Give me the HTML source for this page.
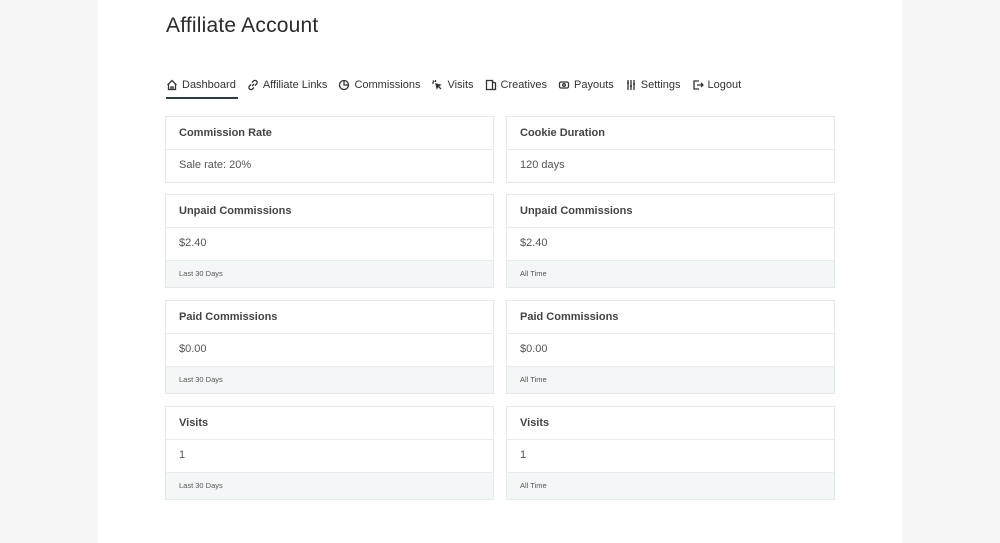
<!DOCTYPE html>
<html><head><meta charset="utf-8"><style>
*{box-sizing:border-box;margin:0;padding:0}
body{width:1000px;height:543px;background:#f7f7f7;font-family:"Liberation Sans",sans-serif;color:#3c3c3c;position:relative;overflow:hidden}
.panel{position:absolute;left:98px;top:0;width:804px;height:543px;background:#fff}
h1{position:absolute;left:166px;top:14px;font-size:21px;font-weight:400;color:#2b2b2b;letter-spacing:0.2px}
.nav{position:absolute;left:166px;top:79px;font-size:11px;color:#333;display:flex;gap:11px;white-space:nowrap}
.nav span{display:flex;align-items:center;gap:4px}
.nav svg{width:12px;height:12px;fill:none;stroke:#333;stroke-width:1.3}
.ul{position:absolute;left:166px;top:97px;width:72px;height:2px;background:#2d3b45}
.card{position:absolute;width:329px;border:1px solid #e6e9ea;background:#fff}
.h{height:33px;line-height:32px;padding-left:13px;font-size:11px;font-weight:bold;color:#444;border-bottom:1px solid #e9ecec}
.b{height:32px;line-height:31px;padding-left:13px;font-size:11px;color:#555}
.f{height:27px;line-height:26px;padding-left:13px;font-size:7.5px;color:#555;background:#f4f7f7;border-top:1px solid #e9ecec}
</style></head><body>
<div class="panel"></div>
<h1>Affiliate Account</h1>
<div class="nav">
<span><svg viewBox="0 0 12 12"><path d="M1.5 6L6 1.5 10.5 6M2.5 5v5.5h7V5M5 10.5V8h2v2.5"/></svg>Dashboard</span>
<span><svg viewBox="0 0 12 12"><path d="M5 7l2-2M4 5.5L2.5 7a2 2 0 003 3L7 8.5M8 6.5L9.5 5a2 2 0 00-3-3L5 3.5"/></svg>Affiliate Links</span>
<span><svg viewBox="0 0 12 12"><circle cx="6" cy="6" r="4.5"/><path d="M6 1.5V6h4.5"/></svg>Commissions</span>
<span><svg viewBox="0 0 12 12"><path d="M5 5l5 5M5 5l1 4 1-2 2-1zM2 1.5l1 1.5M1 4h2M4.5 1v2"/></svg>Visits</span>
<span><svg viewBox="0 0 12 12"><rect x="1.5" y="1.5" width="6" height="9"/><path d="M7.5 3l3 1v6.5h-3"/></svg>Creatives</span>
<span><svg viewBox="0 0 12 12"><rect x="1.5" y="3" width="9" height="6" rx="1.5"/><circle cx="6" cy="6" r="1.3"/></svg>Payouts</span>
<span><svg viewBox="0 0 12 12"><path d="M3 1v10M6 1v10M9 1v10M2 4h2M5 7h2M8 5h2"/></svg>Settings</span>
<span><svg viewBox="0 0 12 12"><path d="M7 2H2v8h5M5 6h6M9 4l2 2-2 2"/></svg>Logout</span>
</div>
<div class="ul"></div>

<div class="card" style="left:165px;top:116px"><div class="h">Commission Rate</div><div class="b">Sale rate: 20%</div></div>
<div class="card" style="left:506px;top:116px"><div class="h">Cookie Duration</div><div class="b">120 days</div></div>

<div class="card" style="left:165px;top:194px"><div class="h">Unpaid Commissions</div><div class="b">$2.40</div><div class="f">Last 30 Days</div></div>
<div class="card" style="left:506px;top:194px"><div class="h">Unpaid Commissions</div><div class="b">$2.40</div><div class="f">All Time</div></div>

<div class="card" style="left:165px;top:300px"><div class="h">Paid Commissions</div><div class="b">$0.00</div><div class="f">Last 30 Days</div></div>
<div class="card" style="left:506px;top:300px"><div class="h">Paid Commissions</div><div class="b">$0.00</div><div class="f">All Time</div></div>

<div class="card" style="left:165px;top:406px"><div class="h">Visits</div><div class="b">1</div><div class="f">Last 30 Days</div></div>
<div class="card" style="left:506px;top:406px"><div class="h">Visits</div><div class="b">1</div><div class="f">All Time</div></div>
</body></html>
